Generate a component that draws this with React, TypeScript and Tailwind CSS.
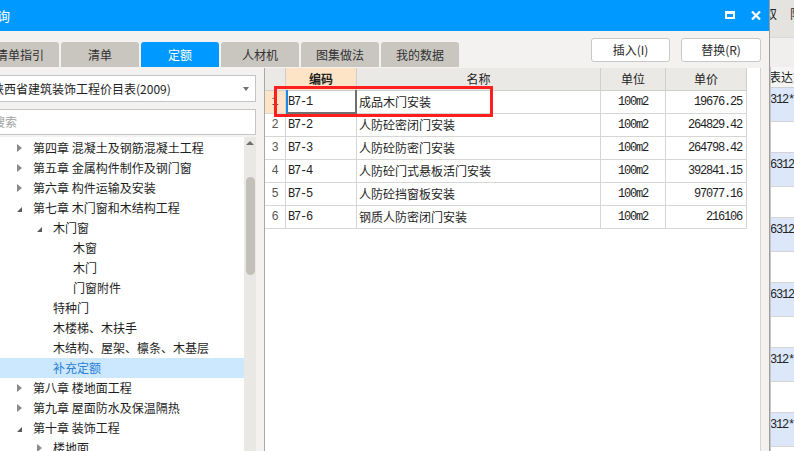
import React from "react";

type TreeItem = {
  label: string;
  level: 0 | 1 | 2;
  tri: "none" | "closed" | "open";
  selected?: boolean;
};

const tree: TreeItem[] = [
  { label: "第四章 混凝土及钢筋混凝土工程", level: 0, tri: "closed" },
  { label: "第五章 金属构件制作及钢门窗", level: 0, tri: "closed" },
  { label: "第六章 构件运输及安装", level: 0, tri: "closed" },
  { label: "第七章 木门窗和木结构工程", level: 0, tri: "open" },
  { label: "木门窗", level: 1, tri: "open" },
  { label: "木窗", level: 2, tri: "none" },
  { label: "木门", level: 2, tri: "none" },
  { label: "门窗附件", level: 2, tri: "none" },
  { label: "特种门", level: 1, tri: "none" },
  { label: "木楼梯、木扶手", level: 1, tri: "none" },
  { label: "木结构、屋架、檩条、木基层", level: 1, tri: "none" },
  { label: "补充定额", level: 1, tri: "none", selected: true },
  { label: "第八章 楼地面工程", level: 0, tri: "closed" },
  { label: "第九章 屋面防水及保温隔热", level: 0, tri: "closed" },
  { label: "第十章 装饰工程", level: 0, tri: "open" },
  { label: "楼地面", level: 1, tri: "closed" },
];

const rows = [
  { n: "1", code: "B7-1", name: "成品木门安装", unit: "100m2", price: "19676.25" },
  { n: "2", code: "B7-2", name: "人防砼密闭门安装", unit: "100m2", price: "264829.42" },
  { n: "3", code: "B7-3", name: "人防砼防密门安装", unit: "100m2", price: "264798.42" },
  { n: "4", code: "B7-4", name: "人防砼门式悬板活门安装", unit: "100m2", price: "392841.15" },
  { n: "5", code: "B7-5", name: "人防砼挡窗板安装", unit: "100m2", price: "97077.16" },
  { n: "6", code: "B7-6", name: "钢质人防密闭门安装", unit: "100m2", price: "216106" },
];

const tabs = ["清单指引", "清单", "定额", "人材机", "图集做法", "我的数据"];

const rightBlocks = ["312*", "6312", "6312", "6312", "312*", "312*"];

function Tri({ kind }: { kind: TreeItem["tri"] }) {
  if (kind === "closed")
    return (
      <div className="w-0 h-0 border-y-[4px] border-y-transparent border-l-[5px] border-l-[#8a8a8a]" />
    );
  if (kind === "open")
    return (
      <div className="w-0 h-0 border-l-[5px] border-l-transparent border-b-[5px] border-b-[#5a5a5a] mt-[2px]" />
    );
  return null;
}

function TreeRow({ item }: { item: TreeItem }) {
  const pl =
    item.level === 0 ? "pl-[17px]" : item.level === 1 ? "pl-[37px]" : "pl-[57px]";
  return (
    <div
      className={`flex items-center h-[20px] shrink-0 ${pl} ${
        item.selected ? "bg-[#cce8ff] text-[#2b80d6]" : "text-[#1e1e1e]"
      }`}
    >
      <div className="w-[16px] flex items-center">
        <Tri kind={item.tri} />
      </div>
      <span className="whitespace-nowrap text-[12px] leading-none">{item.label}</span>
    </div>
  );
}

const mono = "font-['Liberation_Mono',monospace] text-[12px] tracking-[-1.2px]";

export default function App() {
  return (
    <div className="w-[794px] h-[451px] flex overflow-hidden bg-[#f0efed] font-['Noto_Sans_CJK_SC','Noto_Sans',sans-serif]">
      {/* Dialog */}
      <div className="w-[770px] h-full flex flex-col border-r border-[#9c9c9c] shrink-0">
        {/* Title bar */}
        <div className="h-[31px] bg-[#0099ff] flex items-center justify-between shrink-0 overflow-hidden">
          <span className="text-white text-[13px] ml-[-3px] leading-none">询</span>
          <div className="flex items-center gap-[16px] pr-[8px] mt-[-1px]">
            <div className="w-[10px] h-[8px] border-2 border-t-[3px] border-white" />
            <svg width="10" height="9" viewBox="0 0 10 9">
              <path d="M1 0.5 L9 8.5 M9 0.5 L1 8.5" stroke="white" strokeWidth="2.2" />
            </svg>
          </div>
        </div>

        {/* Body */}
        <div className="flex-1 flex flex-col bg-[#f3f2f0] min-h-0">
          {/* Tabs + buttons */}
          <div className="h-[36px] flex shrink-0">
            <div className="flex items-end gap-[2px] ml-[-19px]">
              {tabs.map((t) => (
                <div
                  key={t}
                  className={`w-[78px] h-[25px] rounded-t-[3px] flex items-center justify-center text-[12px] leading-none ${
                    t === "定额" ? "bg-[#0099ff] text-white" : "bg-[#c9c6c0] text-[#303030]"
                  }`}
                >
                  {t}
                </div>
              ))}
            </div>
            <div className="flex-1" />
            <div className="flex gap-[11px] mt-[7px] mr-[8px] h-[24px]">
              <div className="w-[79px] h-[24px] bg-white border border-[#c8c8c8] rounded-[3px] flex items-center justify-center text-[12px] text-[#2a2a2a]">
                插入(I)
              </div>
              <div className="w-[80px] h-[24px] bg-white border border-[#c8c8c8] rounded-[3px] flex items-center justify-center text-[12px] text-[#2a2a2a]">
                替换(R)
              </div>
            </div>
          </div>

          {/* Main area */}
          <div className="flex-1 flex min-h-0">
            {/* Left panel */}
            <div className="w-[256px] flex flex-col shrink-0">
              <div className="mt-[8px] h-[27px] bg-white border border-l-0 border-[#c6c6c6] flex items-center overflow-hidden">
                <span className="ml-[-8px] text-[12px] text-[#1e1e1e] whitespace-nowrap flex-1">
                  陕西省建筑装饰工程价目表(2009)
                </span>
                <div className="w-0 h-0 border-x-[3px] border-x-transparent border-t-[4px] border-t-[#707070] mr-[6px]" />
              </div>
              <div className="mt-[7px] h-[26px] bg-white border border-l-0 border-[#c6c6c6] flex items-center overflow-hidden">
                <span className="ml-[-7px] text-[12px] text-[#a3a3a3]">搜索</span>
              </div>
              <div className="mt-[2px] flex-1 flex bg-white min-h-0">
                <div className="flex-1 flex flex-col pt-[1px] overflow-hidden">
                  {tree.map((it) => (
                    <TreeRow key={it.label} item={it} />
                  ))}
                </div>
                <div className="w-[12px] bg-[#e9e8e5] flex flex-col items-center shrink-0">
                  <div className="mt-[4px] w-0 h-0 border-x-[4px] border-x-transparent border-b-[4px] border-b-[#6e6e6e]" />
                  <div className="mt-[32px] w-[9px] h-[98px] rounded-full bg-[#c3c0ba]" />
                </div>
              </div>
            </div>

            <div className="w-[8px] shrink-0" />

            {/* Table */}
            <div className="relative mt-[1px] w-[497px] bg-white border-l border-[#a8a8a8] border-r border-r-[#d4d4d4] flex flex-col shrink-0">
              {/* Header */}
              <div className="flex h-[23px] shrink-0 text-[12px] text-[#222]">
                <div className="w-[21px] bg-[#ebe9e6] border-r border-b border-[#cfcfcf]" />
                <div className="w-[71px] bg-[#fde4c6] border-r border-b border-[#cfcfcf] flex items-center justify-center font-bold">
                  编码
                </div>
                <div className="w-[244px] bg-[#ebe9e6] border-r border-b border-[#cfcfcf] flex items-center justify-center">
                  名称
                </div>
                <div className="w-[65px] bg-[#ebe9e6] border-r border-b border-[#cfcfcf] flex items-center justify-center">
                  单位
                </div>
                <div className="w-[81px] bg-[#ebe9e6] border-r border-b border-[#cfcfcf] flex items-center justify-center">
                  单价
                </div>
              </div>
              {rows.map((r, i) => (
                <div key={r.n} className="flex h-[23px] shrink-0 text-[#1e1e1e]">
                  <div
                    className={`w-[21px] border-r border-b border-[#d6d6d6] flex items-center justify-center font-['Liberation_Mono',monospace] text-[12px] text-[#555] ${
                      i === 0 ? "bg-[#fde4c6]" : ""
                    }`}
                  >
                    {r.n}
                  </div>
                  <div className={`relative w-[71px] border-r border-b border-[#d6d6d6] flex items-center pl-[2px] ${mono}`}>
                    {r.code}
                    {i === 0 && (
                      <div className="absolute inset-[-1px] left-0 border-l-2 border-l-[#1e88e5] border-r-2 border-b-2 border-[#707070]" />
                    )}
                  </div>
                  <div className="w-[244px] border-r border-b border-[#d6d6d6] flex items-center pl-[2px] text-[12px] whitespace-nowrap">
                    {r.name}
                  </div>
                  <div className={`w-[65px] border-r border-b border-[#d6d6d6] flex items-center justify-center ${mono}`}>
                    {r.unit}
                  </div>
                  <div className={`w-[81px] border-r border-b border-[#d6d6d6] flex items-center justify-end pr-[4px] ${mono}`}>
                    {r.price}
                  </div>
                </div>
              ))}
              {/* Red highlight box */}
              <div className="absolute left-[9px] top-[18px] w-[219px] h-[31px] border-[3px] border-[#ff1f1f]" />
            </div>
          </div>
        </div>
      </div>

      {/* Background app strip */}
      <div className="flex-1 flex flex-col overflow-hidden min-w-0">
        <div className="h-[37px] bg-[#e5e3e0] shrink-0 relative overflow-hidden">
          <span className="absolute left-[-5px] top-[5px] text-[12px] text-[#222] whitespace-nowrap">双</span>
          <span className="absolute left-[20px] top-[5px] text-[12px] text-[#222] whitespace-nowrap">限</span>
        </div>
        <div className="h-[30px] bg-[#f0efed] border-t border-[#d8d8d8] shrink-0" />
        <div className="flex-1 flex flex-col bg-white border-l border-[#c8c8c8] min-h-0">
          <div className="h-[21px] bg-[#f5f5f5] border-b border-[#d0d0d0] shrink-0 flex items-center overflow-hidden">
            <span className="ml-[-2px] text-[12px] text-[#222] whitespace-nowrap">表达式</span>
          </div>
          {rightBlocks.map((t, i) => (
            <React.Fragment key={i}>
              <div className="h-[34px] bg-[#dce8fa] shrink-0 border-b border-[#d4d4d4] overflow-hidden">
                <div className={`ml-[-1px] mt-[6px] text-[#222] whitespace-nowrap leading-none ${mono}`}>
                  {t}
                </div>
              </div>
              <div className="h-[31px] bg-white shrink-0 border-b border-[#d4d4d4]" />
            </React.Fragment>
          ))}
        </div>
      </div>
    </div>
  );
}
